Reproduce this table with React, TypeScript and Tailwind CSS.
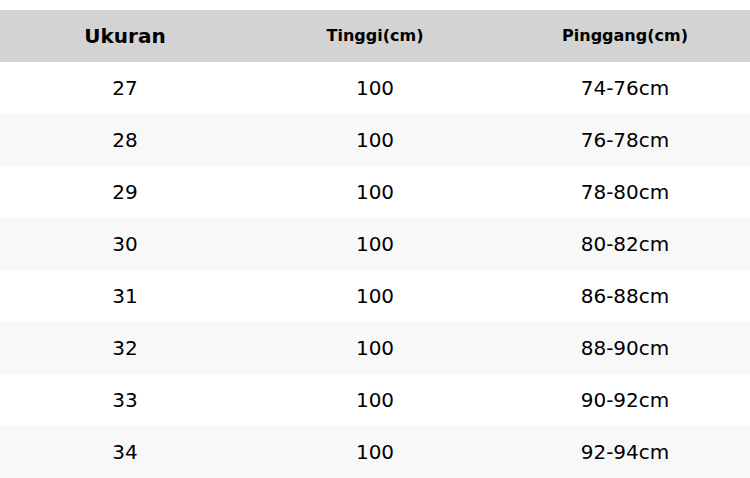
const rows = [
  ['27', '100', '74-76cm'],
  ['28', '100', '76-78cm'],
  ['29', '100', '78-80cm'],
  ['30', '100', '80-82cm'],
  ['31', '100', '86-88cm'],
  ['32', '100', '88-90cm'],
  ['33', '100', '90-92cm'],
  ['34', '100', '92-94cm'],
];

export default function App() {
  return (
    <div className="w-[750px] h-[478px] bg-white pt-[10px] text-black font-['DejaVu_Sans',sans-serif] overflow-hidden">
      <div className="grid grid-cols-3 h-[52px] items-center bg-[#d3d3d3] text-center font-bold">
        <div className="text-[20px]">Ukuran</div>
        <div className="text-[16px]">Tinggi(cm)</div>
        <div className="text-[16px]">Pinggang(cm)</div>
      </div>
      {rows.map((r, i) => (
        <div
          key={r[0]}
          className={`grid grid-cols-3 h-[52px] items-center text-center text-[20px] ${
            i % 2 === 1 ? 'bg-[#f8f8f8]' : 'bg-white'
          }`}
        >
          {r.map((c, j) => (
            <div key={j}>{c}</div>
          ))}
        </div>
      ))}
    </div>
  );
}
